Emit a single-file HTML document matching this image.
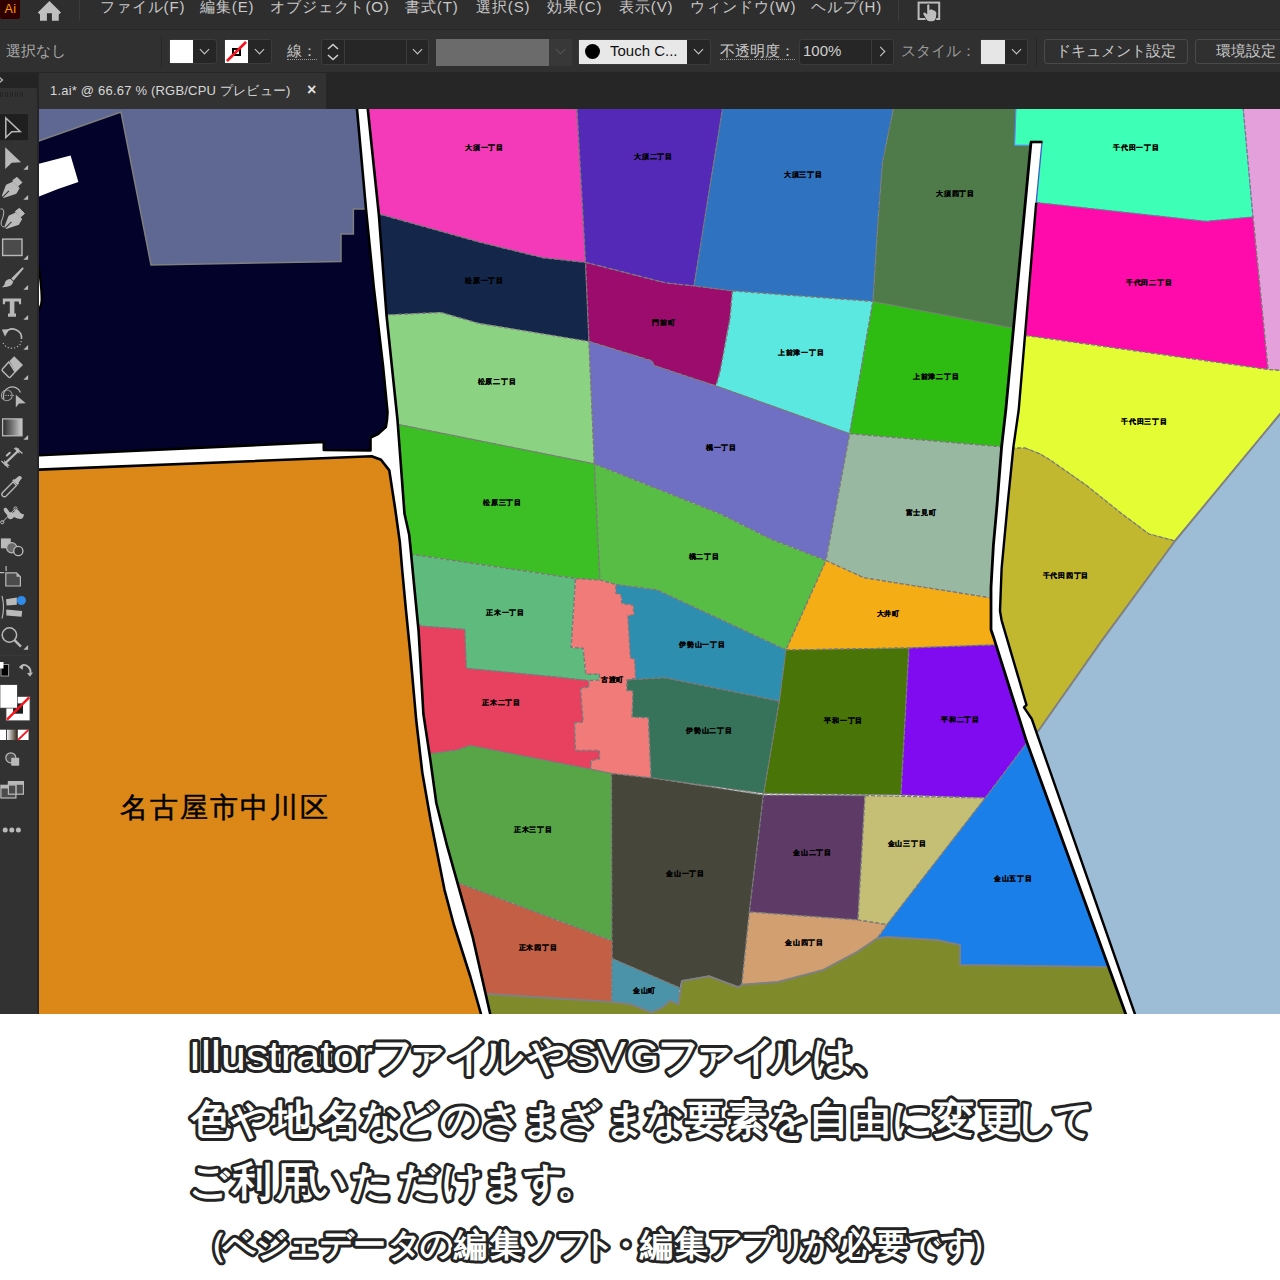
<!DOCTYPE html>
<html lang="ja">
<head>
<meta charset="utf-8">
<style>
*{box-sizing:border-box}
html,body{margin:0;padding:0}
body{width:1280px;height:1280px;position:relative;overflow:hidden;background:#ffffff;font-family:"Liberation Sans",sans-serif}
.abs{position:absolute}
#menubar{left:0;top:0;width:1280px;height:29px;background:#2e2e2e}
#ctrl{left:0;top:29px;width:1280px;height:44px;background:#303030;border-top:1px solid #262626;border-bottom:1px solid #262626}
#tabbar{left:0;top:73px;width:1280px;height:36px;background:#262626}
#tool{left:0;top:88px;width:39px;height:926px;background:#323232;border-right:2px solid #262626;border-top-right-radius:3px}
.menu{position:absolute;top:-3px;font-size:15px;color:#c9c9c9;white-space:nowrap;line-height:20px;letter-spacing:0.9px}
.lbl{position:absolute;font-size:15px;color:#a8a8a8;white-space:nowrap;line-height:18px}
.box{position:absolute;background:#262626;border:1px solid #3b3b3b;border-radius:3px}
.chev{position:absolute;width:7px;height:7px;border-right:1.6px solid #cfcfcf;border-bottom:1.6px solid #cfcfcf;transform:rotate(45deg)}
.btn{position:absolute;border:1px solid #4a4a4a;border-radius:3px;color:#c9c9c9;font-size:15px;line-height:22px;text-align:center;white-space:nowrap}
.bt{position:absolute;left:0;width:1280px;font-size:45px;line-height:1;color:#fff;font-weight:bold;letter-spacing:-3px;white-space:nowrap;
 -webkit-text-stroke:0;paint-order:stroke fill;
 text-shadow:0 0 0 #000}
</style>
</head>
<body>
<!-- menu bar -->
<div id="menubar" class="abs">
  <div class="abs" style="left:0;top:0;width:20px;height:19px;background:#300000;border-radius:0 0 2px 2px"></div>
  <div class="abs" style="left:4.5px;top:3px;font-size:12.5px;color:#ff9a00;line-height:13px;letter-spacing:0.5px">Ai</div>
  <svg class="abs" style="left:36px;top:0px" width="26" height="22" viewBox="0 0 26 22"><path d="M13.4,1 L25,12.5 L22.75,14.4 L22.75,20.8 L15.9,20.8 L15.9,13.2 L10.9,13.2 L10.9,20.8 L4,20.8 L4,14.4 L1.8,12.5 Z" fill="#c0c0c0"/></svg>
  <div class="abs" style="left:79px;top:0;width:1px;height:21px;background:#3c3c3c"></div>
  <div class="menu" style="left:100px">ファイル(F)</div>
  <div class="menu" style="left:200px">編集(E)</div>
  <div class="menu" style="left:270px">オブジェクト(O)</div>
  <div class="menu" style="left:405px">書式(T)</div>
  <div class="menu" style="left:476px">選択(S)</div>
  <div class="menu" style="left:547px">効果(C)</div>
  <div class="menu" style="left:619px">表示(V)</div>
  <div class="menu" style="left:690px">ウィンドウ(W)</div>
  <div class="menu" style="left:811px">ヘルプ(H)</div>
  <div class="abs" style="left:898px;top:0;width:1px;height:21px;background:#3c3c3c"></div>
  <svg class="abs" style="left:917px;top:0" width="24" height="22" viewBox="0 0 24 22"><rect x="1.6" y="2.6" width="20.6" height="16.4" fill="none" stroke="#bdbdbd" stroke-width="2"/><path d="M10.2,5 Q11.3,3.6 12.4,5 L12.4,10 L14,9.4 Q15,9 15.5,10 L17,10.4 Q18,10.5 18.4,11.5 L19,12 Q19.6,13 19.3,14 L18.8,18 Q18,21.2 15,21.2 L12.5,21.2 Q10.5,21.2 9.5,19.5 L6.3,14 Q6,12.6 7.2,12.4 Q8.5,12.4 10.2,14.5 Z" fill="#bdbdbd" stroke="#2e2e2e" stroke-width="1.4" paint-order="stroke fill"/></svg>
</div>
<!-- control bar -->
<div id="ctrl" class="abs">
  <div class="lbl" style="left:6px;top:12px">選択なし</div>
  <div class="abs" style="left:161px;top:7px;width:1px;height:30px;background:#262626"></div>
  <div class="box" style="left:169px;top:9px;width:48px;height:25px"></div>
  <div class="abs" style="left:170px;top:10px;width:23px;height:23px;background:#fff"></div>
  <div class="chev" style="left:201px;top:16px"></div>
  <div class="box" style="left:224px;top:9px;width:48px;height:25px"></div>
  <svg class="abs" style="left:225px;top:10px" width="23" height="23" viewBox="0 0 23 23"><rect width="23" height="23" fill="#fff"/><rect x="8" y="9" width="7" height="6" fill="none" stroke="#000" stroke-width="2"/><line x1="2" y1="21" x2="21" y2="2" stroke="#f0141e" stroke-width="2.6"/></svg>
  <div class="chev" style="left:256px;top:16px"></div>
  <div class="lbl" style="left:287px;top:12px;color:#c9c9c9;border-bottom:1px dotted #9a9a9a;line-height:17px">線：</div>
  <div class="box" style="left:321px;top:9px;width:108px;height:26px"></div>
  <div class="abs" style="left:344px;top:10px;width:1px;height:24px;background:#3b3b3b"></div>
  <div class="abs" style="left:406px;top:10px;width:1px;height:24px;background:#3b3b3b"></div>
  <svg class="abs" style="left:325px;top:11px" width="16" height="22" viewBox="0 0 16 22"><path d="M3,8 L8,3.5 L13,8 M3,14 L8,18.5 L13,14" fill="none" stroke="#cfcfcf" stroke-width="1.6"/></svg>
  <div class="chev" style="left:414px;top:16px"></div>
  <div class="abs" style="left:436px;top:9px;width:113px;height:27px;background:#6b6b6b"></div>
  <div class="abs" style="left:549px;top:9px;width:23px;height:27px;background:#383838"></div>
  <div class="chev" style="left:557px;top:16px;border-color:#555"></div>
  <div class="box" style="left:578px;top:9px;width:133px;height:26px"></div>
  <div class="abs" style="left:579px;top:10px;width:108px;height:24px;background:#e8e8e8"></div>
  <div class="abs" style="left:585px;top:14px;width:15px;height:15px;border-radius:50%;background:#000"></div>
  <div class="abs" style="left:610px;top:12px;font-size:15px;color:#111;line-height:18px;white-space:nowrap">Touch C...</div>
  <div class="chev" style="left:695px;top:16px"></div>
  <div class="lbl" style="left:720px;top:12px;color:#c9c9c9;border-bottom:1px dotted #9a9a9a;line-height:17px">不透明度：</div>
  <div class="box" style="left:799px;top:9px;width:95px;height:26px"></div>
  <div class="abs" style="left:871px;top:10px;width:1px;height:24px;background:#3b3b3b"></div>
  <div class="abs" style="left:803px;top:12px;font-size:15px;color:#d0d0d0;line-height:18px">100%</div>
  <div class="abs" style="left:877px;top:18px;width:7px;height:7px;border-right:1.6px solid #cfcfcf;border-top:1.6px solid #cfcfcf;transform:rotate(45deg)"></div>
  <div class="lbl" style="left:901px;top:12px;color:#9a9a9a">スタイル：</div>
  <div class="box" style="left:980px;top:9px;width:48px;height:26px"></div>
  <div class="abs" style="left:981px;top:10px;width:24px;height:24px;background:#e6e6e6"></div>
  <div class="chev" style="left:1013px;top:16px"></div>
  <div class="abs" style="left:1036px;top:7px;width:1px;height:30px;background:#262626"></div>
  <div class="btn" style="left:1044px;top:9px;width:144px;height:25px">ドキュメント設定</div>
  <div class="btn" style="left:1195px;top:9px;width:100px;height:25px;text-align:left;padding-left:20px">環境設定</div>
</div>
<!-- tab bar -->
<div id="tabbar" class="abs">
  <div class="abs" style="left:0;top:0;width:37px;height:15px;background:#242424"></div>
  <svg class="abs" style="left:0;top:3px" width="6" height="8" viewBox="0 0 6 8"><path d="M-1,1 L2.5,4 L-1,7" fill="none" stroke="#b0b0b0" stroke-width="1.4"/></svg>
  <div class="abs" style="left:37px;top:0;width:2px;height:36px;background:#262626"></div>
  <div class="abs" style="left:39px;top:0;width:287px;height:36px;background:#323232"></div>
  <div class="abs" style="left:50px;top:10px;font-size:13px;color:#d8d8d8;white-space:nowrap;line-height:16px;letter-spacing:0.2px">1.ai* @ 66.67 % (RGB/CPU プレビュー)</div>
  <div class="abs" style="left:307px;top:8px;font-size:16px;color:#e0e0e0;line-height:18px;font-weight:bold">×</div>
</div>
<!-- left toolbar -->
<div id="tool" class="abs">
<svg width="38" height="926" viewBox="0 88 38 926" style="position:absolute;left:0;top:0">
  <defs>
   <linearGradient id="gr" x1="0" x2="1"><stop offset="0" stop-color="#2a2a2a"/><stop offset="0.5" stop-color="#777"/><stop offset="1" stop-color="#cfcfcf"/></linearGradient>
   <linearGradient id="gr2" x1="0" x2="1"><stop offset="0" stop-color="#f4f4f4"/><stop offset="1" stop-color="#3a3020"/></linearGradient>
  </defs>
  <g fill="#b9b9b9" stroke="none">
   <path d="M0.5,92 V97 M2.5,92 V97 M5.5,92 V97 M7.5,92 V97 M10.5,92 V97 M12.5,92 V97 M15.5,92 V97 M17.5,92 V97 M20.5,92 V97 M22.5,92 V97" stroke="#242424" stroke-width="1"/>
   <rect x="-2" y="113.6" width="30.6" height="27.2" rx="2" fill="#1f1f1f" stroke="#383838" stroke-width="0.8"/>
   <path d="M5.8,118 L5.8,137.6 L11.8,131.8 L20.2,131.6 Z" fill="none" stroke="#b9b9b9" stroke-width="1.5" stroke-linejoin="miter"/>
   <path d="M5.2,147.3 L5.2,168.9 L11.7,162.8 L21.1,162.3 Z"/>
   <path d="M23.4,169.8 L28.1,169.8 L28.1,165.1 Z"/>
   <path d="M1.9,195.6 L6.1,184.8 L13.1,181.5 L19.7,188.1 L16.4,193.7 L3.7,198 Z"/>
   <path d="M12.7,180.6 L16.9,177.3 L22,182.5 L17.8,186.2 Z" stroke="#b9b9b9" stroke-width="1" stroke-linejoin="round"/>
   <path d="M3,196.8 L8.9,190.9" stroke="#323232" stroke-width="1.1"/>
   <path d="M23.4,199.8 L28.1,199.8 L28.1,195.1 Z"/>
   <path d="M4.4,226.6 L8.6,215.8 L15.6,212.5 L22.2,219.1 L18.9,224.7 L6.2,229 Z"/>
   <path d="M15.2,211.6 L19.4,208.3 L24.5,213.5 L20.3,217.2 Z" stroke="#b9b9b9" stroke-width="1" stroke-linejoin="round"/>
   <path d="M5.5,227.8 L11.4,221.9" stroke="#323232" stroke-width="1.1"/>
   <path d="M0.5,209 Q4,208 3.8,213 Q3,218 1.2,222 Q0.5,227 4.5,227" fill="none" stroke="#b9b9b9" stroke-width="1"/>
   <rect x="2.6" y="239.1" width="19.4" height="16.4" fill="#4b4b4b" stroke="#b9b9b9" stroke-width="1.4"/>
   <path d="M23.4,259.8 L28.1,259.8 L28.1,255.1 Z"/>
   <path d="M22.5,267.2 L23.8,268.6 L13.5,280.8 L11.2,278.6 Z"/>
   <path d="M10.5,279 L13.2,281.6 Q12.5,287.5 1.9,287.2 Q5,285.5 5,282.5 Q6,279.3 10.5,279 Z"/>
   <path d="M23.4,289.8 L28.1,289.8 L28.1,285.1 Z"/>
   <path d="M2.8,298.4 L21.1,298.4 L21.1,304.2 L19.3,304.2 L18.6,301.4 L14.4,301.4 L14.4,313.6 L16,313.6 L16,316.7 L8,316.7 L8,313.6 L9.8,313.6 L9.8,301.4 L5.4,301.4 L4.7,304.2 L2.8,304.2 Z"/>
   <path d="M23.4,319.8 L28.1,319.8 L28.1,315.1 Z"/>
   <path d="M5.5,332.5 A9,9 0 0 1 21.5,339" fill="none" stroke="#b9b9b9" stroke-width="1.6"/>
   <path d="M1.9,329.4 L9.2,329.2 L5,336.5 Z"/>
   <path d="M21.2,341 A9,7 0 0 1 2.8,341" fill="none" stroke="#b9b9b9" stroke-width="1.2" stroke-dasharray="1.2 2"/>
   <path d="M23.4,349.8 L28.1,349.8 L28.1,345.1 Z"/>
   <path d="M9.5,361 L14.2,356.2 L23,365 L15.5,372.5 Z"/>
   <path d="M8.8,362 L15,372 L10.5,377 Q9.5,378 8.5,377 L2.5,371 Q1.5,370 2.5,369 Z" fill="none" stroke="#b9b9b9" stroke-width="1.4"/>
   <path d="M23.4,379.8 L28.1,379.8 L28.1,375.1 Z"/>
   <circle cx="6.8" cy="395.4" r="5.4" fill="none" stroke="#9a9a9a" stroke-width="1.1"/>
   <path d="M4,399 A8.4,8.4 0 1 1 20.5,392.5" fill="none" stroke="#b9b9b9" stroke-width="1.2"/>
   <path d="M3,395.4 L15,395.4" stroke="#b9b9b9" stroke-width="1" stroke-dasharray="1.2 1.2"/>
   <path d="M15.8,394.8 L15.8,407.6 L19,403.5 L25.8,403.2 Z"/>
   <rect x="2.6" y="418.9" width="19.4" height="16.9" fill="url(#gr)" stroke="#b9b9b9" stroke-width="1.3"/>
   <path d="M23.4,439.8 L28.1,439.8 L28.1,435.1 Z"/>
   <path d="M1.4,461 L8.4,467.6 M15.5,447.5 L22.5,453.6" stroke="#b9b9b9" stroke-width="1.3" fill="none"/>
   <path d="M5,463.5 L18.5,450.5" stroke="#b9b9b9" stroke-width="2.4" fill="none"/>
   <path d="M4,460 L4.5,465.5 L10,466 Z M19.5,454 L19,448.5 L13.5,448 Z"/>
   <path d="M6.8,455.6 L9.8,452.8" stroke="#b9b9b9" stroke-width="2" stroke-linecap="round"/>
   <path d="M2.6,496 Q1,494.3 2.6,492.5 L13,482 L16.5,485.5 L6.2,496 Q4.5,497.6 2.6,496 Z" fill="none" stroke="#b9b9b9" stroke-width="1.3"/>
   <path d="M12.2,480.6 L13.5,479.3 L14.6,479.6 L19,476 Q21.5,475.7 22,478 L18.6,482.5 L19,483.6 L17.6,485 Z"/>
   <path d="M3.5,509 Q6,506 8,510 Q10,514 14,512 L15,510 Q17,508 19,511 Q21,515 24,514 Q23.5,518.5 21,519 Q17,519 14,517 Q11,521 8,518 Q7,514 4.5,512 Z"/>
   <path d="M2.5,522 L15.5,508.5" stroke="#b9b9b9" stroke-width="1" fill="none"/>
   <circle cx="2.3" cy="522.2" r="1.6" fill="none" stroke="#b9b9b9" stroke-width="1"/>
   <circle cx="15.5" cy="508.5" r="1.6" fill="none" stroke="#b9b9b9" stroke-width="1"/>
   <rect x="0.9" y="538.4" width="9.9" height="9.9"/>
   <circle cx="11.7" cy="547.8" r="5.1" fill="#6a6a6a" stroke="#b9b9b9" stroke-width="1.2"/>
   <circle cx="18.3" cy="551" r="4.6" fill="#323232" stroke="#b9b9b9" stroke-width="1.4"/>
   <path d="M6.1,566 L6.1,571 M0,572.6 L4.2,572.6" stroke="#b9b9b9" stroke-width="1.2" fill="none"/>
   <path d="M5.8,572.8 L16.5,572.8 L20.4,576.8 L20.4,586 L5.8,586 Z" fill="#4b4b4b" stroke="#b9b9b9" stroke-width="1.2"/>
   <path d="M16.5,572.8 L16.5,576.8 L20.4,576.8 Z"/>
   <path d="M2,596 Q5,607 2,618.5" fill="none" stroke="#b9b9b9" stroke-width="1.1"/>
   <path d="M6,599.2 L16.8,597.6 L16.8,604.8 L6.6,605.6 Z"/>
   <path d="M6.2,609.4 L22.2,611 L21.6,616.8 L6.4,615.6 Z"/>
   <circle cx="21.4" cy="600.5" r="4.5" fill="#2e8be8"/>
   <circle cx="9.4" cy="635" r="7.2" fill="none" stroke="#b9b9b9" stroke-width="1.5"/>
   <path d="M14.5,640.2 L21,646.6" stroke="#b9b9b9" stroke-width="2.4"/>
   <path d="M23.4,649.8 L28.1,649.8 L28.1,645.1 Z"/>
   <rect x="0" y="654.8" width="31" height="0.8" fill="#3e3e3e"/>
   <rect x="1" y="664.5" width="7.6" height="11.5" fill="#000" stroke="#9a9a9a" stroke-width="1"/>
   <rect x="-1" y="662" width="4.5" height="6.5" fill="#fff"/>
   <path d="M20,668 Q23,662.5 28.5,667 Q31,669.5 30.5,673" fill="none" stroke="#b9b9b9" stroke-width="1.8"/>
   <path d="M19.2,666.8 L23.5,664 L22.5,670 Z M27,673 L33,672.5 L30,676.8 Z"/>
   <rect x="6" y="696.4" width="24" height="24.4" fill="#fff" stroke="#444" stroke-width="0.8"/>
   <rect x="13.1" y="703.4" width="9.9" height="10.3" fill="#1e1e1e"/>
   <rect x="0" y="684.7" width="17.3" height="23.4" fill="#fff" stroke="#2a2a2a" stroke-width="0.6"/>
   <line x1="7" y1="719.6" x2="29.2" y2="697.3" stroke="#f5141e" stroke-width="2.4"/>
   <rect x="0" y="729.7" width="6.1" height="10.3" fill="#fff"/>
   <rect x="7" y="729.7" width="9.9" height="10.3" fill="url(#gr2)"/>
   <rect x="17.8" y="729.7" width="10.8" height="10.3" fill="#fff"/>
   <line x1="18" y1="740" x2="28.4" y2="729.8" stroke="#f5141e" stroke-width="1.8"/>
   <circle cx="10.8" cy="757.8" r="5" fill="#4b4b4b" stroke="#b9b9b9" stroke-width="1.2"/>
   <rect x="11.2" y="757.8" width="8" height="7.9" rx="0.8"/>
   <rect x="8.4" y="781.6" width="15" height="12.6" fill="#4b4b4b" stroke="#b9b9b9" stroke-width="1.2"/>
   <rect x="8.4" y="781.6" width="15" height="3.2"/>
   <rect x="0.9" y="785.3" width="15" height="12.7" fill="#4b4b4b" stroke="#b9b9b9" stroke-width="1.2"/>
   <rect x="0.9" y="785.3" width="15" height="3.2"/>
   <rect x="8.4" y="785" width="7.5" height="9.2" fill="#4b4b4b" stroke="#b9b9b9" stroke-width="1.2"/>
   <circle cx="5.2" cy="830.1" r="2.5"/><circle cx="11.8" cy="830.1" r="2.5"/><circle cx="18.4" cy="830.1" r="2.5"/>
  </g>
</svg>
</div>
<svg width="1280" height="1014" viewBox="0 0 1280 1014" style="position:absolute;left:0;top:0">
<defs><clipPath id="cv"><rect x="39" y="109" width="1241" height="905"/></clipPath></defs>
<g clip-path="url(#cv)">
<rect x="39" y="109" width="1241" height="905" fill="#ffffff"/>
<polygon points="350.0,100.0 577.0,109.0 585.6,262.5 542.8,257.8 478.8,242.0 378.8,214.0 350.0,214.0" fill="#f43ab8" stroke="#7a7a7a" stroke-width="1.25" stroke-dasharray="4 2" stroke-linejoin="round"/>
<polygon points="577.0,109.0 577.0,100.0 722.5,100.0 722.5,109.0 694.0,286.0 666.0,283.0 585.6,262.5" fill="#5429b8" stroke="#7a7a7a" stroke-width="1.25" stroke-dasharray="4 2" stroke-linejoin="round"/>
<polygon points="722.5,100.0 893.4,100.0 893.4,109.0 882.5,162.5 877.8,225.0 873.0,301.5 732.5,291.0 694.0,286.0 722.5,109.0" fill="#2f72c0" stroke="#7a7a7a" stroke-width="1.25" stroke-dasharray="4 2" stroke-linejoin="round"/>
<polygon points="893.4,100.0 1016.3,100.0 1014.7,145.2 1031.0,145.2 1040.0,145.0 1040.0,330.0 1012.0,328.0 873.0,301.5 877.8,225.0 882.5,162.5 893.4,109.0" fill="#4f7b4a" stroke="#7a7a7a" stroke-width="1.25" stroke-dasharray="4 2" stroke-linejoin="round"/>
<polygon points="350.0,214.0 378.8,214.0 478.8,242.0 542.8,257.8 585.6,262.5 589.0,341.5 478.8,323.4 441.0,312.5 386.5,315.0 350.0,315.0" fill="#14264a" stroke="#7a7a7a" stroke-width="1.25" stroke-dasharray="4 2" stroke-linejoin="round"/>
<polygon points="585.6,262.5 666.0,283.0 694.0,286.0 732.5,291.0 730.0,319.0 720.0,372.0 716.0,386.0 654.0,365.6 652.0,361.0 589.0,341.5" fill="#9b0c6c" stroke="#7a7a7a" stroke-width="1.25" stroke-dasharray="4 2" stroke-linejoin="round"/>
<polygon points="732.5,291.0 873.0,301.5 849.7,433.8 716.0,386.0 720.0,372.0 730.0,319.0" fill="#5ae8e0" stroke="#7a7a7a" stroke-width="1.25" stroke-dasharray="4 2" stroke-linejoin="round"/>
<polygon points="873.0,301.5 1012.0,328.0 1040.0,330.0 1040.0,447.0 1002.8,446.9 849.7,433.8" fill="#2fbc12" stroke="#7a7a7a" stroke-width="1.25" stroke-dasharray="4 2" stroke-linejoin="round"/>
<polygon points="350.0,315.0 386.5,315.0 441.0,312.5 478.8,323.4 589.0,341.5 594.4,463.9 399.0,424.7 350.0,424.7" fill="#8bd383" stroke="#7a7a7a" stroke-width="1.25" stroke-dasharray="4 2" stroke-linejoin="round"/>
<polygon points="589.0,341.5 652.0,361.0 654.0,365.6 716.0,386.0 849.7,433.8 826.0,560.6 770.0,538.8 720.0,513.8 594.4,463.9" fill="#6f6fc3" stroke="#7a7a7a" stroke-width="1.25" stroke-dasharray="4 2" stroke-linejoin="round"/>
<polygon points="350.0,424.7 399.0,424.7 594.4,463.9 600.0,580.0 575.5,578.6 411.6,554.4 350.0,554.0" fill="#3cbf25" stroke="#7a7a7a" stroke-width="1.25" stroke-dasharray="4 2" stroke-linejoin="round"/>
<polygon points="849.7,433.8 1002.8,446.9 1040.0,447.0 1040.0,598.0 991.0,598.0 863.8,577.8 826.0,560.6" fill="#98b8a2" stroke="#7a7a7a" stroke-width="1.25" stroke-dasharray="4 2" stroke-linejoin="round"/>
<polygon points="594.4,463.9 720.0,513.8 770.0,538.8 826.0,560.6 786.0,650.0 657.0,590.0 615.8,584.6 600.0,580.0" fill="#57bd45" stroke="#7a7a7a" stroke-width="1.25" stroke-dasharray="4 2" stroke-linejoin="round"/>
<polygon points="826.0,560.6 863.8,577.8 991.0,598.0 1040.0,598.0 1040.0,645.0 992.0,645.0 909.0,648.0 786.0,650.0" fill="#f5ad16" stroke="#7a7a7a" stroke-width="1.25" stroke-dasharray="4 2" stroke-linejoin="round"/>
<polygon points="350.0,554.0 411.6,554.4 575.5,578.6 571.2,647.3 583.2,648.2 585.8,674.0 599.5,674.0 599.5,680.0 588.4,680.8 560.0,677.4 466.2,668.4 464.7,629.4 422.5,626.2 417.8,624.7 350.0,624.0" fill="#5fbb7d" stroke="#7a7a7a" stroke-width="1.25" stroke-dasharray="4 2" stroke-linejoin="round"/>
<polygon points="615.8,584.6 657.0,590.0 786.0,650.0 779.4,701.2 664.7,677.8 627.0,680.0 627.9,615.5 633.9,614.7 633.0,605.2 621.9,603.5 621.0,595.0 615.8,593.2" fill="#2e8eb0" stroke="#7a7a7a" stroke-width="1.25" stroke-dasharray="4 2" stroke-linejoin="round"/>
<polygon points="350.0,624.0 417.8,624.7 422.5,626.2 464.7,629.4 466.2,668.4 560.0,677.4 588.4,680.8 589.2,686.8 580.6,688.6 583.2,722.0 574.6,722.9 575.5,750.4 599.5,750.4 599.5,759.0 591.0,760.7 591.0,769.3 470.3,745.6 456.2,750.3 430.5,753.8 350.0,754.0" fill="#e8405f" stroke="#7a7a7a" stroke-width="1.25" stroke-dasharray="4 2" stroke-linejoin="round"/>
<polygon points="575.5,578.6 600.0,580.0 615.8,584.6 615.8,593.2 621.0,595.0 621.9,603.5 633.0,605.2 633.9,614.7 627.9,615.5 630.4,657.6 634.7,659.3 635.6,678.2 627.0,680.0 627.0,690.3 633.0,691.0 632.2,716.9 648.5,717.8 651.0,777.9 611.5,773.6 591.0,769.3 591.0,760.7 599.5,759.0 599.5,750.4 575.5,750.4 574.6,722.9 583.2,722.0 580.6,688.6 589.2,686.8 588.4,680.8 599.5,680.0 599.5,674.0 585.8,674.0 583.2,648.2 571.2,647.3" fill="#f07b78" stroke="#7a7a7a" stroke-width="1.25" stroke-dasharray="4 2" stroke-linejoin="round"/>
<polygon points="627.0,680.0 664.7,677.8 779.4,701.2 763.8,793.4 651.0,777.9 648.5,717.8 632.2,716.9 633.0,691.0 627.0,690.3" fill="#37735a" stroke="#7a7a7a" stroke-width="1.25" stroke-dasharray="4 2" stroke-linejoin="round"/>
<polygon points="786.0,650.0 909.0,648.0 901.0,795.0 763.8,793.4 779.4,701.2" fill="#487408" stroke="#7a7a7a" stroke-width="1.25" stroke-dasharray="4 2" stroke-linejoin="round"/>
<polygon points="909.0,648.0 992.0,645.0 1040.0,645.0 1040.0,742.0 1027.5,742.0 985.3,798.0 901.0,795.0" fill="#800af0" stroke="#7a7a7a" stroke-width="1.25" stroke-dasharray="4 2" stroke-linejoin="round"/>
<polygon points="350.0,754.0 430.5,753.8 456.2,750.3 470.3,745.6 591.0,769.3 611.5,773.6 612.0,941.0 457.4,882.7 350.0,882.0" fill="#57a547" stroke="#7a7a7a" stroke-width="1.25" stroke-dasharray="4 2" stroke-linejoin="round"/>
<polygon points="611.5,773.6 651.0,777.9 763.4,795.0 749.4,912.0 741.8,984.8 738.3,987.2 709.0,976.2 682.0,980.9 679.7,987.9 612.0,958.6" fill="#47463a" stroke="#7a7a7a" stroke-width="1.25" stroke-dasharray="4 2" stroke-linejoin="round"/>
<polygon points="763.4,795.0 865.0,795.6 858.0,920.0 749.4,912.0" fill="#5e3b66" stroke="#7a7a7a" stroke-width="1.25" stroke-dasharray="4 2" stroke-linejoin="round"/>
<polygon points="865.0,795.6 985.3,798.0 887.0,924.7 858.0,920.0" fill="#c4bf74" stroke="#7a7a7a" stroke-width="1.25" stroke-dasharray="4 2" stroke-linejoin="round"/>
<polygon points="985.3,798.0 1027.5,742.0 1033.3,742.0 1113.5,967.0 1107.0,967.0 960.0,965.0 960.0,945.0 937.0,940.0 886.0,937.0 877.0,938.5 887.0,924.7" fill="#1b7fe9" stroke="#7a7a7a" stroke-width="1.25" stroke-dasharray="4 2" stroke-linejoin="round"/>
<polygon points="749.4,912.0 858.0,920.0 887.0,924.7 877.0,938.5 857.8,951.6 822.6,970.3 778.0,982.0 741.8,984.8" fill="#d29f70" stroke="#7a7a7a" stroke-width="1.25" stroke-dasharray="4 2" stroke-linejoin="round"/>
<polygon points="350.0,882.0 457.4,882.7 612.0,941.0 611.7,1002.0 487.9,994.0 350.0,994.0" fill="#c25f45" stroke="#7a7a7a" stroke-width="1.25" stroke-dasharray="4 2" stroke-linejoin="round"/>
<polygon points="612.0,958.6 679.7,987.9 678.5,1004.3 670.3,1000.8 662.0,1007.8 651.6,1012.5 630.5,1004.3 611.7,1002.0" fill="#4a93a8" stroke="#7a7a7a" stroke-width="1.25" stroke-dasharray="4 2" stroke-linejoin="round"/>
<polygon points="350.0,994.0 487.9,994.0 611.7,1002.0 630.5,1004.3 651.6,1012.5 662.0,1007.8 670.3,1000.8 678.5,1004.3 682.0,980.9 709.0,976.2 738.3,987.2 741.8,984.8 778.0,982.0 822.6,970.3 857.8,951.6 876.5,938.7 886.0,937.0 937.0,940.0 960.0,945.0 960.0,965.0 1107.0,967.0 1140.0,967.0 1140.0,1030.0 350.0,1030.0" fill="#7f8a2a" stroke="#808080" stroke-width="2" stroke-linejoin="round"/>
<polygon points="1016.3,100.0 1242.5,100.0 1253.0,217.0 1206.0,221.4 1036.2,202.6 1030.8,202.6 1036.2,145.2 1014.7,145.2" fill="#3dffb6" stroke="#5a7dff" stroke-width="1" stroke-linejoin="round"/>
<polygon points="1242.5,100.0 1290.0,100.0 1290.0,371.0 1268.0,369.5 1253.0,217.0" fill="#e4a0da" stroke="#7a7a7a" stroke-width="1.25" stroke-dasharray="4 2" stroke-linejoin="round"/>
<polygon points="1036.2,202.6 1206.0,221.4 1253.0,217.0 1268.0,369.5 1025.7,335.5 1018.9,335.5 1030.8,202.6" fill="#ff0aab" stroke="#7a7a7a" stroke-width="1.25" stroke-dasharray="4 2" stroke-linejoin="round"/>
<polygon points="1007.4,448.0 1007.5,446.9 1012.2,410.0 1018.9,335.5 1025.7,335.5 1268.0,369.5 1290.0,371.0 1290.0,402.0 1175.0,541.0 1148.8,534.0 1120.7,513.0 1085.5,484.8 1050.0,460.0 1040.0,454.0 1025.0,448.0" fill="#e4fc33" stroke="#7a7a7a" stroke-width="1.25" stroke-dasharray="4 2" stroke-linejoin="round"/>
<polygon points="1025.0,448.0 1040.0,454.0 1050.0,460.0 1085.5,484.8 1120.7,513.0 1148.8,534.0 1175.0,541.0 1101.3,641.3 1038.3,731.0 1029.6,731.0 1025.6,719.0 1019.9,707.4 1020.7,704.8 1019.2,700.0 999.9,636.7 997.7,629.7 996.3,620.3 995.5,611.0 995.9,587.5 996.8,568.7 998.6,545.3 1002.2,505.5 1007.4,448.0" fill="#c1b82f" stroke="#7a7a7a" stroke-width="1.25" stroke-dasharray="4 2" stroke-linejoin="round"/>
<polygon points="1290.0,402.0 1175.0,541.0 1101.3,641.3 1038.3,731.0 1029.6,731.0 1033.0,741.3 1130.3,1014.0 1135.5,1030.0 1290.0,1030.0" fill="#9dbdd7" stroke="#808080" stroke-width="2" stroke-linejoin="round"/>
<polygon points="357.0,100.0 357.0,109.0 366.0,209.0 373.8,287.5 383.0,365.6 387.5,412.0 387.0,420.0 385.8,427.0 378.0,434.0 370.5,437.6 370.5,450.5 323.8,450.0 323.8,442.0 30.0,455.6 30.0,100.0" fill="#02022b"/>
<polygon points="30.0,100.0 357.0,100.0 357.0,109.0 366.0,209.0 353.4,209.0 353.4,234.0 341.0,234.0 341.0,261.5 151.0,265.0 121.0,112.0 30.0,144.0" fill="#5e6892" stroke="#7f7f7f" stroke-width="1.5"/>
<polygon points="30.0,166.0 70.6,155.6 78.4,181.9 58.0,189.0 30.0,200.0" fill="#ffffff"/>
<path d="M37,257 Q41.8,284 41.8,300 Q41.6,307 37,312 Z" fill="#ffffff" stroke="#000" stroke-width="2.4"/>
<polygon points="30.0,470.0 371.7,456.3 381.0,459.8 389.3,470.4 395.2,509.0 399.8,541.9 402.2,570.0 405.7,607.5 410.4,654.4 416.2,720.0 422.3,772.6 430.5,819.5 444.5,889.8 453.9,925.0 470.3,976.5 481.0,1014.0 483.0,1030.0 30.0,1030.0" fill="#db8818"/>
<polygon points="357.0,100.0 357.0,109.0 366.0,209.0 373.8,287.5 383.0,365.6 387.5,412.0 387.0,420.0 385.8,427.0 378.0,434.0 370.5,437.6 370.5,450.5 323.8,450.0 323.8,442.0 30.0,455.6 30.0,470.0 371.7,456.3 381.0,459.8 389.3,470.4 395.2,509.0 399.8,541.9 402.2,570.0 405.7,607.5 410.4,654.4 416.2,720.0 422.3,772.6 430.5,819.5 444.5,889.8 453.9,925.0 470.3,976.5 481.0,1014.0 483.0,1030.0 494.0,1030.0 490.2,1014.0 472.6,936.6 457.4,882.7 446.9,845.2 436.3,803.0 430.5,760.9 423.4,714.0 418.6,631.0 414.0,584.0 410.4,546.6 409.2,534.8 404.5,513.8 401.0,466.9 397.5,420.0 386.5,315.0 378.8,214.0 367.8,109.0 367.8,100.0" fill="#ffffff" stroke="#000" stroke-width="2.6" stroke-linejoin="round"/>
<polygon points="1031.0,142.0 1005.8,410.0 1001.6,446.9 997.0,505.5 993.4,545.3 991.0,587.5 991.0,629.7 993.4,636.7 1013.4,700.0 1026.5,741.3 1125.7,1014.0 1131.0,1030.0 1140.0,1030.0 1134.9,1014.0 1031.8,719.0 1024.0,707.4 1026.5,704.8 1025.0,700.0 1001.6,620.3 1000.0,611.0 1001.6,568.7 1007.5,505.5 1013.4,446.9 1018.7,410.0 1036.2,202.6 1042.0,142.0" fill="#ffffff"/>
<polyline points="1031.0,142.0 1005.8,410.0 1001.6,446.9 997.0,505.5 993.4,545.3 991.0,587.5 991.0,629.7 993.4,636.7 1013.4,700.0 1026.5,741.3 1125.7,1014.0 1131.0,1030.0" fill="none" stroke="#000" stroke-width="2.8" stroke-linejoin="round"/>
<polyline points="1036.2,202.6 1018.7,410.0 1013.4,446.9 1007.5,505.5 1001.6,568.7 1000.0,611.0 1001.6,620.3 1025.0,700.0 1026.5,704.8 1024.0,707.4 1031.8,719.0 1134.9,1014.0 1140.0,1030.0" fill="none" stroke="#000" stroke-width="2.4" stroke-linejoin="round"/>
<polyline points="1042.0,142.0 1036.2,202.6" fill="none" stroke="#3b5bd0" stroke-width="1.3"/>
<line x1="1030" y1="142" x2="1042.5" y2="142" stroke="#000" stroke-width="2.6"/>
<g font-family="Liberation Sans, sans-serif" font-size="7.1" font-weight="bold" fill="#000" stroke="#000" stroke-width="0.15" letter-spacing="0.75" text-anchor="middle" dominant-baseline="central">
<text x="484.4" y="147.5">大須一丁目</text>
<text x="653.4" y="157.0">大須二丁目</text>
<text x="803.2" y="175.0">大須三丁目</text>
<text x="955.4" y="193.8">大須四丁目</text>
<text x="1136.3" y="147.6">千代田一丁目</text>
<text x="484.4" y="281.0">松原一丁目</text>
<text x="664.1" y="322.5">門前町</text>
<text x="1149.2" y="283.3">千代田二丁目</text>
<text x="801.0" y="353.0">上前津一丁目</text>
<text x="936.0" y="377.0">上前津二丁目</text>
<text x="496.9" y="382.0">松原二丁目</text>
<text x="1144.4" y="422.0">千代田三丁目</text>
<text x="721.4" y="448.0">橘一丁目</text>
<text x="502.4" y="503.4">松原三丁目</text>
<text x="921.0" y="512.5">富士見町</text>
<text x="704.1" y="556.6">橘二丁目</text>
<text x="1065.9" y="576.2">千代田四丁目</text>
<text x="505.4" y="613.0">正木一丁目</text>
<text x="888.2" y="613.8">大井町</text>
<text x="702.4" y="645.0">伊勢山一丁目</text>
<text x="612.4" y="680.0">古渡町</text>
<text x="501.4" y="703.0">正木二丁目</text>
<text x="843.8" y="721.0">平和一丁目</text>
<text x="960.4" y="720.0">平和二丁目</text>
<text x="709.4" y="731.0">伊勢山二丁目</text>
<text x="533.2" y="830.0">正木三丁目</text>
<text x="907.0" y="844.4">金山三丁目</text>
<text x="812.4" y="853.4">金山二丁目</text>
<text x="685.4" y="873.8">金山一丁目</text>
<text x="1013.2" y="879.4">金山五丁目</text>
<text x="804.4" y="943.4">金山四丁目</text>
<text x="537.9" y="948.0">正木四丁目</text>
<text x="644.4" y="991.0">金山町</text>
</g>
<text x="224.7" y="807" font-family="Liberation Sans, sans-serif" font-size="28" fill="#000" stroke="#000" stroke-width="0.5" text-anchor="middle" dominant-baseline="central" letter-spacing="2">名古屋市中川区</text>
</g></svg>
<!-- bottom text -->
<div class="abs" style="left:0;top:1014px;width:1280px;height:266px;background:#fff"></div>
<svg class="abs" style="left:0;top:1014px" width="1280" height="266" viewBox="0 1014 1280 266">
 <g font-family="Liberation Sans, sans-serif" font-weight="bold" fill="#fff" stroke="#242424" stroke-width="6" stroke-linejoin="round" paint-order="stroke fill">
  <text x="188.7" y="1070" font-size="41" font-weight="normal" textLength="184" lengthAdjust="spacingAndGlyphs">Illustrator</text>
  <text x="372.0" y="1070" font-size="41">フ</text>
  <text x="405.0" y="1070" font-size="41">ァ</text>
  <text x="446.8" y="1070" font-size="41">イ</text>
  <text x="481.5" y="1070" font-size="41">ル</text>
  <text x="527.5" y="1070" font-size="41">や</text>
  <text x="568.5" y="1070" font-size="41" font-weight="normal" textLength="91" lengthAdjust="spacingAndGlyphs">SVG</text>
  <text x="658.0" y="1070" font-size="41">フ</text>
  <text x="691.6" y="1070" font-size="41">ァ</text>
  <text x="734.3" y="1070" font-size="41">イ</text>
  <text x="768.5" y="1070" font-size="41">ル</text>
  <text x="812.0" y="1070" font-size="41">は</text>
  <text x="851.8" y="1070" font-size="41">、</text>
  <text x="190.5" y="1133" font-size="40">色</text>
  <text x="230.5" y="1133" font-size="40">や</text>
  <text x="273.0" y="1133" font-size="40">地</text>
  <text x="318.5" y="1133" font-size="40">名</text>
  <text x="360.0" y="1133" font-size="40">な</text>
  <text x="396.9" y="1133" font-size="40">ど</text>
  <text x="440.3" y="1133" font-size="40">の</text>
  <text x="481.4" y="1133" font-size="40">さ</text>
  <text x="521.4" y="1133" font-size="40">ま</text>
  <text x="559.4" y="1133" font-size="40">ざ</text>
  <text x="604.5" y="1133" font-size="40">ま</text>
  <text x="643.8" y="1133" font-size="40">な</text>
  <text x="685.4" y="1133" font-size="40">要</text>
  <text x="727.1" y="1133" font-size="40">素</text>
  <text x="768.0" y="1133" font-size="40">を</text>
  <text x="808.5" y="1133" font-size="40">自</text>
  <text x="851.0" y="1133" font-size="40">由</text>
  <text x="891.5" y="1133" font-size="40">に</text>
  <text x="934.2" y="1133" font-size="40">変</text>
  <text x="978.5" y="1133" font-size="40">更</text>
  <text x="1015.1" y="1133" font-size="40">し</text>
  <text x="1053.2" y="1133" font-size="40">て</text>
  <text x="188.8" y="1195" font-size="40">ご</text>
  <text x="231.5" y="1195" font-size="40">利</text>
  <text x="275.6" y="1195" font-size="40">用</text>
  <text x="307.1" y="1195" font-size="40">い</text>
  <text x="351.0" y="1195" font-size="40">た</text>
  <text x="397.5" y="1195" font-size="40">だ</text>
  <text x="441.6" y="1195" font-size="40">け</text>
  <text x="481.7" y="1195" font-size="40">ま</text>
  <text x="524.3" y="1195" font-size="40">す</text>
  <text x="556.8" y="1195" font-size="40">。</text>
  <text x="193.5" y="1256" font-size="33">（</text>
  <text x="222.6" y="1256" font-size="33">ベ</text>
  <text x="256.1" y="1256" font-size="33">ジ</text>
  <text x="286.5" y="1256" font-size="33">ェ</text>
  <text x="319.9" y="1256" font-size="33">デ</text>
  <text x="352.5" y="1256" font-size="33">ー</text>
  <text x="388.4" y="1256" font-size="33">タ</text>
  <text x="419.5" y="1256" font-size="33">の</text>
  <text x="454.4" y="1256" font-size="33">編</text>
  <text x="489.5" y="1256" font-size="33">集</text>
  <text x="522.6" y="1256" font-size="33">ソ</text>
  <text x="555.5" y="1256" font-size="33">フ</text>
  <text x="581.5" y="1256" font-size="33">ト</text>
  <text x="608.5" y="1256" font-size="33">・</text>
  <text x="640.4" y="1256" font-size="33">編</text>
  <text x="675.3" y="1256" font-size="33">集</text>
  <text x="708.8" y="1256" font-size="33">ア</text>
  <text x="741.5" y="1256" font-size="33">プ</text>
  <text x="772.8" y="1256" font-size="33">リ</text>
  <text x="801.5" y="1256" font-size="33">が</text>
  <text x="838.7" y="1256" font-size="33">必</text>
  <text x="875.3" y="1256" font-size="33">要</text>
  <text x="908.2" y="1256" font-size="33">で</text>
  <text x="940.5" y="1256" font-size="33">す</text>
  <text x="968.9" y="1256" font-size="33">）</text>
 </g>
</svg>
</body>
</html>
